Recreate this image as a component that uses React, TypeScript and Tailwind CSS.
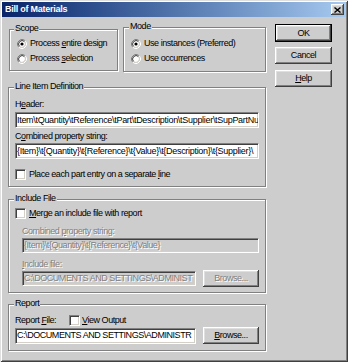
import React from 'react';

const U = ({ children }: { children: React.ReactNode }) => (
  <span className="underline underline-offset-[1px]">{children}</span>
);

function Radio({ checked }: { checked?: boolean }) {
  return (
    <svg width="10" height="10" viewBox="0 0 10 10" className="shrink-0">
      <circle cx="5" cy="5" r="3.2" fill="#fff" />
      <path d="M1.82 8.18 A4.5 4.5 0 0 1 8.18 1.82" fill="none" stroke="#808080" strokeWidth="1" />
      <path d="M8.18 1.82 A4.5 4.5 0 0 1 1.82 8.18" fill="none" stroke="#fff" strokeWidth="1" />
      <path d="M2.53 7.47 A3.5 3.5 0 0 1 7.47 2.53" fill="none" stroke="#404040" strokeWidth="1" />
      <path d="M7.47 2.53 A3.5 3.5 0 0 1 2.53 7.47" fill="none" stroke="#d4d0c8" strokeWidth="1" />
      {checked && <circle cx="5" cy="5" r="1.6" fill="#000" />}
    </svg>
  );
}

function Check() {
  return (
    <div className="w-[11px] h-[11px] shrink-0 bg-white border border-t-[#808080] border-l-[#808080] border-b-white border-r-white shadow-[inset_1px_1px_0_#404040,inset_-1px_-1px_0_#d4d0c8]" />
  );
}

function Group({
  label,
  className,
  labelClass,
  children,
}: {
  label: string;
  className: string;
  labelClass: string;
  children: React.ReactNode;
}) {
  return (
    <div className={`relative border border-[#808080] shadow-[inset_1px_1px_0_#fff,1px_1px_0_#fff] ${className}`}>
      <span className={`absolute top-[-7px] px-[1px] bg-[#cdcdcd] leading-[11px] whitespace-nowrap ${labelClass}`}>
        {label}
      </span>
      {children}
    </div>
  );
}

const raised =
  'flex items-center justify-center bg-[#cdcdcd] shadow-[inset_-1px_-1px_0_#404040,inset_1px_1px_0_#fff,inset_-2px_-2px_0_#808080,inset_2px_2px_0_#dfdfdf]';

const sunkenWhite =
  'flex items-center pl-[1px] overflow-hidden whitespace-nowrap bg-white border border-t-[#808080] border-l-[#808080] border-b-white border-r-white shadow-[inset_1px_1px_0_#404040,inset_-1px_-1px_0_#d4d0c8]';

const sunkenGray =
  'flex items-center pl-[1px] overflow-hidden whitespace-nowrap bg-[#cdcdcd] border border-t-[#808080] border-l-[#808080] border-b-white border-r-white shadow-[inset_1px_1px_0_#404040,inset_-1px_-1px_0_#d4d0c8]';

const disabledText = 'text-[#808080] [text-shadow:1px_1px_0_#fff]';

export default function App() {
  return (
    <div className="w-[348px] h-[362px] bg-[#cdcdcd] text-black font-['Liberation_Sans',Arial,sans-serif] text-[9px] leading-[11px] tracking-[-0.45px] shadow-[inset_1px_1px_0_#dfdfdf,inset_-1px_-1px_0_#404040,inset_2px_2px_0_#fff,inset_-2px_-2px_0_#808080] overflow-hidden">
      {/* Title bar */}
      <div className="mx-[2px] mt-[2px] h-[15px] flex items-center bg-gradient-to-r from-[#0a246a] to-[#a6caf0] pl-[3px]">
        <span className="text-white font-bold tracking-[-0.25px] leading-[11px]">Bill of Materials</span>
        <div className={`ml-auto mr-[2px] w-[13px] h-[11px] ${raised}`}>
          <svg width="7" height="6" viewBox="0 0 7 6">
            <path d="M0.5 0.5 L6.5 5.5 M6.5 0.5 L0.5 5.5" stroke="#000" strokeWidth="1.4" />
          </svg>
        </div>
      </div>

      <div className="flex pl-[8px]">
        {/* Left column */}
        <div className="w-[258px] pt-[10px] flex flex-col">
          <div className="h-[45px] flex items-start">
            <Group label="Scope" className="ml-[1px] mt-[2px] w-[109px] h-[42px] pt-[8px] pl-[7px]" labelClass="left-[4px]">
              <div className="flex items-center gap-[3px] h-[11px]">
                <Radio checked />
                <span>
                  Process <U>e</U>ntire design
                </span>
              </div>
              <div className="flex items-center gap-[3px] h-[11px] mt-[4px]">
                <Radio />
                <span>
                  Process <U>s</U>election
                </span>
              </div>
            </Group>
            <Group label="Mode" className="ml-[5px] w-[143px] h-[45px] pt-[10px] pl-[7px]" labelClass="left-[5px]">
              <div className="flex items-center gap-[3px] h-[11px]">
                <Radio checked />
                <span>Use instances (Preferred)</span>
              </div>
              <div className="flex items-center gap-[3px] h-[11px] mt-[4px]">
                <Radio />
                <span>Use occurrences</span>
              </div>
            </Group>
          </div>

          <Group label="Line Item Definition" className="mt-[15px] h-[100px] pt-[11px] pl-[6px] flex flex-col" labelClass="left-[5px]">
            <div>
              H<U>e</U>ader:
            </div>
            <div className={`mt-[2px] w-[244px] h-[16px] tracking-[-0.3px] ${sunkenWhite}`}>
              Item\tQuantity\tReference\tPart\tDescription\tSupplier\tSupPartNu
            </div>
            <div className="mt-[3px]">
              C<U>o</U>mbined property string:
            </div>
            <div className={`mt-[1px] w-[244px] h-[16px] tracking-[-0.3px] ${sunkenWhite}`}>
              {'{Item}\\t{Quantity}\\t{Reference}\\t{Value}\\t{Description}\\t{Supplier}\\'}
            </div>
            <div className="mt-[10px] flex items-center gap-[3px] h-[11px]">
              <Check />
              <span>
                Place each part entry on a separate <U>l</U>ine
              </span>
            </div>
          </Group>

          <Group label="Include File" className="mt-[12px] h-[94px] pt-[8px] pl-[6px] flex flex-col" labelClass="left-[5px]">
            <div className="flex items-center gap-[3px] h-[11px]">
              <Check />
              <span>
                <U>M</U>erge an include file with report
              </span>
            </div>
            <div className={`mt-[7px] ml-[7px] ${disabledText}`}>
              Combined <U>p</U>roperty string:
            </div>
            <div className={`mt-[1px] ml-[7px] w-[237px] h-[15px] ${sunkenGray} ${disabledText}`}>
              {'{Item}\\t{Quantity}\\t{Reference}\\t{Value}'}
            </div>
            <div className={`mt-[6px] ml-[7px] ${disabledText}`}>
              <U>I</U>nclude file:
            </div>
            <div className="ml-[7px] flex items-center h-[17px]">
              <div className={`w-[174px] h-[15px] ${sunkenGray} ${disabledText}`}>C:\DOCUMENTS AND SETTINGS\ADMINIST</div>
              <div className={`ml-[7px] w-[56px] h-[17px] ${raised} ${disabledText}`}>Browse...</div>
            </div>
          </Group>

          <Group label="Report" className="mt-[11px] h-[47px] pt-[9px] pl-[6px] flex flex-col" labelClass="left-[5px]">
            <div className="flex items-center h-[12px]">
              <span className="w-[54px]">
                Report <U>F</U>ile:
              </span>
              <Check />
              <span className="ml-[2px]">
                <U>V</U>iew Output
              </span>
            </div>
            <div className="mt-[1px] flex items-center h-[17px]">
              <div className={`w-[181px] h-[16px] ${sunkenWhite}`}>C:\DOCUMENTS AND SETTINGS\ADMINISTR</div>
              <div className={`ml-[7px] w-[56px] h-[17px] ${raised}`}>
                <span>
                  <U>B</U>rowse...
                </span>
              </div>
            </div>
          </Group>
        </div>

        {/* Right column */}
        <div className="ml-[9px] w-[57px] pt-[7px] flex flex-col">
          <div className="h-[18px] border border-black">
            <div className={`w-full h-full ${raised}`}>OK</div>
          </div>
          <div className={`mt-[5px] h-[17px] ${raised}`}>Cancel</div>
          <div className={`mt-[6px] h-[17px] ${raised}`}>
            <span>
              <U>H</U>elp
            </span>
          </div>
        </div>
      </div>
    </div>
  );
}
